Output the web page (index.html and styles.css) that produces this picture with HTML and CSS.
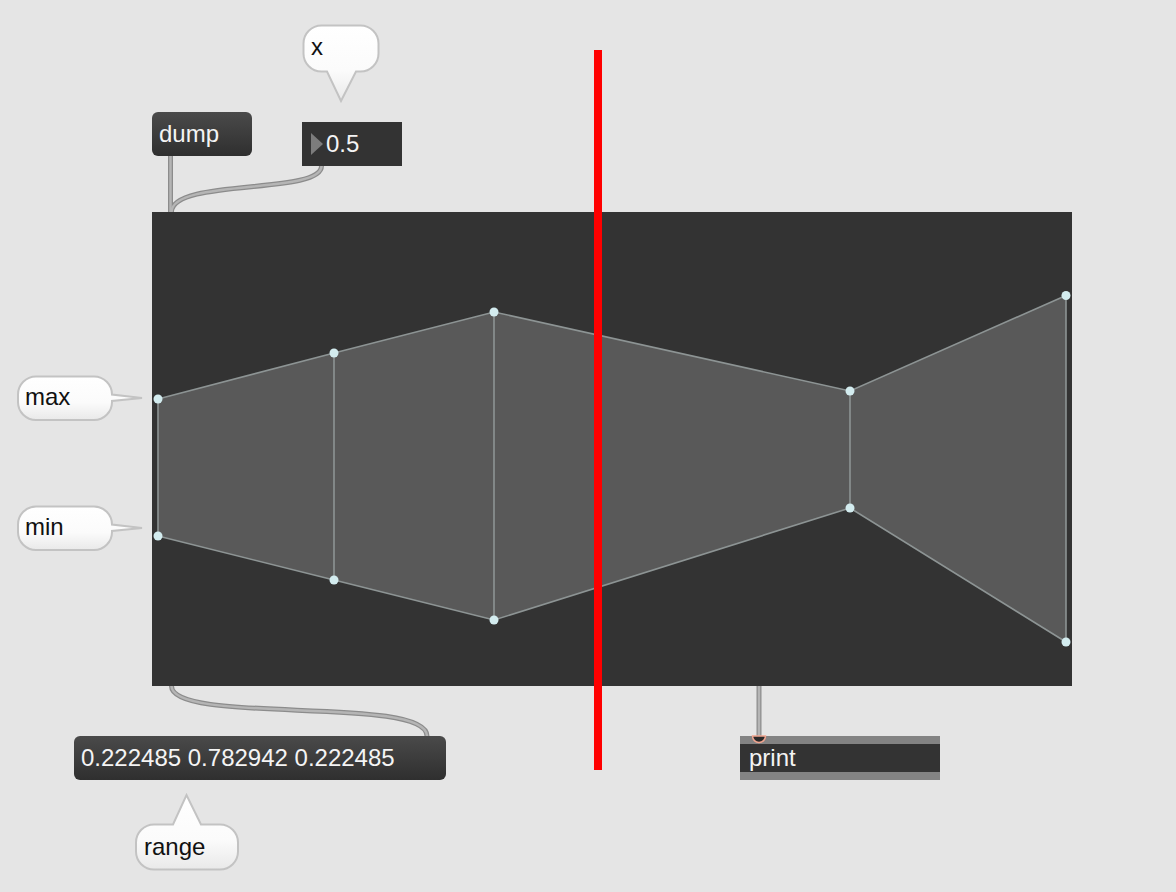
FILE: index.html
```html
<!DOCTYPE html>
<html>
<head>
<meta charset="utf-8">
<title>function patch</title>
<link rel="stylesheet" href="styles.css">
</head>
<body>
<div class="patcher">
  <svg class="bubbles" width="1176" height="892" viewBox="0 0 1176 892">
    <defs>
      <linearGradient id="bg" x1="0" y1="0" x2="0" y2="1">
        <stop offset="0" stop-color="#ffffff"/>
        <stop offset="0.6" stop-color="#fbfbfb"/>
        <stop offset="1" stop-color="#e9e9e9"/>
      </linearGradient>
    </defs>
    <path class="bubble" d="M321.5,25.5 H360.5 A18,18 0 0 1 378.5,43.5 V53.5 A18,18 0 0 1 360.5,71.5 H356 L341,101 L327,71.5 H321.5 A18,18 0 0 1 303.5,53.5 V43.5 A18,18 0 0 1 321.5,25.5 Z"/>
    <path class="bubble" d="M36,376.5 H94 A18,18 0 0 1 112,394.5 L142,398 L112,401 V402 A18,18 0 0 1 94,420 H36 A18,18 0 0 1 18,402 V394.5 A18,18 0 0 1 36,376.5 Z"/>
    <path class="bubble" d="M36,506.5 H94 A18,18 0 0 1 112,524.5 L142,528 L112,531 V532 A18,18 0 0 1 94,550 H36 A18,18 0 0 1 18,532 V524.5 A18,18 0 0 1 36,506.5 Z"/>
    <path class="bubble" d="M154,824.5 H173 L186.5,795 L201,824.5 H220 A18,18 0 0 1 238,842.5 V851.5 A18,18 0 0 1 220,869.5 H154 A18,18 0 0 1 136,851.5 V842.5 A18,18 0 0 1 154,824.5 Z"/>
  </svg>

  <div class="comment c-x">x</div>
  <div class="comment c-max">max</div>
  <div class="comment c-min">min</div>
  <div class="comment c-range">range</div>

  <div class="message m-dump">dump</div>
  <div class="numbox n-x"><span class="tri"></span><span class="num">0.5</span></div>

  <div class="function-panel">
    <svg class="fn" width="920" height="474" viewBox="0 0 920 474">
      <polygon class="area" points="6,187 182,141 342,100 698,179 914,83.5 914,430 698,296 342,408 182,368 6,324"/>
      <polyline class="edge" points="6,187 182,141 342,100 698,179 914,83.5"/>
      <polyline class="edge" points="6,324 182,368 342,408 698,296 914,430"/>
      <line class="edge" x1="6" y1="187" x2="6" y2="324"/>
      <line class="edge" x1="182" y1="141" x2="182" y2="368"/>
      <line class="edge" x1="342" y1="100" x2="342" y2="408"/>
      <line class="edge" x1="698" y1="179" x2="698" y2="296"/>
      <line class="edge" x1="914" y1="83.5" x2="914" y2="430"/>
      <circle class="pt" cx="6" cy="187" r="4.5"/>
      <circle class="pt" cx="182" cy="141" r="4.5"/>
      <circle class="pt" cx="342" cy="100" r="4.5"/>
      <circle class="pt" cx="698" cy="179" r="4.5"/>
      <circle class="pt" cx="914" cy="83.5" r="4.5"/>
      <circle class="pt" cx="6" cy="324" r="4.5"/>
      <circle class="pt" cx="182" cy="368" r="4.5"/>
      <circle class="pt" cx="342" cy="408" r="4.5"/>
      <circle class="pt" cx="698" cy="296" r="4.5"/>
      <circle class="pt" cx="914" cy="430" r="4.5"/>
    </svg>
  </div>

  <div class="message m-range">0.222485 0.782942 0.222485</div>
  <div class="object o-print">print</div>

  <svg class="cables" width="1176" height="892" viewBox="0 0 1176 892">
    <g class="cable">
      <path d="M170.5,156 V212"/>
      <path d="M321.5,166 C321.5,195 172,178 171.5,212"/>
      <path d="M171.5,686 C171.5,725 427,695 427,736"/>
      <path d="M759,686 V736"/>
    </g>
    <g class="cable-core">
      <path d="M170.5,156 V212"/>
      <path d="M321.5,166 C321.5,195 172,178 171.5,212"/>
      <path d="M171.5,686 C171.5,725 427,695 427,736"/>
      <path d="M759,686 V736"/>
    </g>
    <path class="inlet" d="M752.5,736 A6.5,6.5 0 0 0 765.5,736 Z"/>
  </svg>

  <div class="playhead"></div>
</div>
</body>
</html>
```

FILE: styles.css
```css
html, body {
  margin: 0;
  padding: 0;
  background: #e5e5e5;
}

.patcher {
  position: relative;
  width: 1176px;
  height: 892px;
  overflow: hidden;
  background: #e5e5e5;
  font-family: "Liberation Sans", Arial, Helvetica, sans-serif;
  font-size: 24px;
}

.bubbles,
.cables {
  position: absolute;
  left: 0;
  top: 0;
  pointer-events: none;
}

.bubbles { z-index: 1; }
.cables { z-index: 4; }

.bubble {
  fill: url(#bg);
  stroke: #c3c3c3;
  stroke-width: 2;
}

.comment {
  position: absolute;
  z-index: 2;
  height: 44px;
  line-height: 44px;
  color: #111;
  padding-left: 8px;
  white-space: nowrap;
}

.c-x { left: 303px; top: 25px; }
.c-max { left: 17px; top: 375px; }
.c-min { left: 17px; top: 505px; }
.c-range { left: 136px; top: 825px; }

.message {
  position: absolute;
  z-index: 3;
  height: 44px;
  line-height: 44px;
  box-sizing: border-box;
  padding-left: 7px;
  border-radius: 6px;
  color: #f4f4f4;
  background: linear-gradient(#4a4a4a, #2f2f2f);
  white-space: nowrap;
}

.m-dump { left: 152px; top: 112px; width: 100px; }
.m-range { left: 74px; top: 736px; width: 372px; }

.numbox {
  position: absolute;
  z-index: 3;
  left: 302px;
  top: 122px;
  width: 100px;
  height: 44px;
  background: #333333;
  color: #f4f4f4;
  display: flex;
  align-items: center;
}

.tri {
  width: 0;
  height: 0;
  margin-left: 9px;
  border-top: 11.5px solid transparent;
  border-bottom: 11.5px solid transparent;
  border-left: 12px solid #7c7c7c;
}

.num {
  margin-left: 3px;
  line-height: 44px;
}

.function-panel {
  position: absolute;
  z-index: 2;
  left: 152px;
  top: 212px;
  width: 920px;
  height: 474px;
  background: #333333;
}

.fn { display: block; }

.area { fill: #595959; stroke: none; }
.edge { fill: none; stroke: #8d9494; stroke-width: 1.6; }
.pt { fill: #d3ecef; }

.object {
  position: absolute;
  z-index: 3;
  box-sizing: border-box;
  background: #333333;
  border-top: 8px solid #838383;
  border-bottom: 8px solid #838383;
  color: #f4f4f4;
  padding-left: 9px;
  line-height: 28px;
  white-space: nowrap;
}

.o-print { left: 740px; top: 736px; width: 200px; height: 44px; }

.cable path {
  fill: none;
  stroke: #8c8c8c;
  stroke-width: 5;
}

.cable-core path {
  fill: none;
  stroke: #b5b5b5;
  stroke-width: 2.5;
}

.inlet {
  fill: #2a2a2a;
  stroke: #f0a48f;
  stroke-width: 1.5;
}

.playhead {
  position: absolute;
  z-index: 5;
  left: 594px;
  top: 50px;
  width: 8px;
  height: 720px;
  background: #ff0000;
}
```
